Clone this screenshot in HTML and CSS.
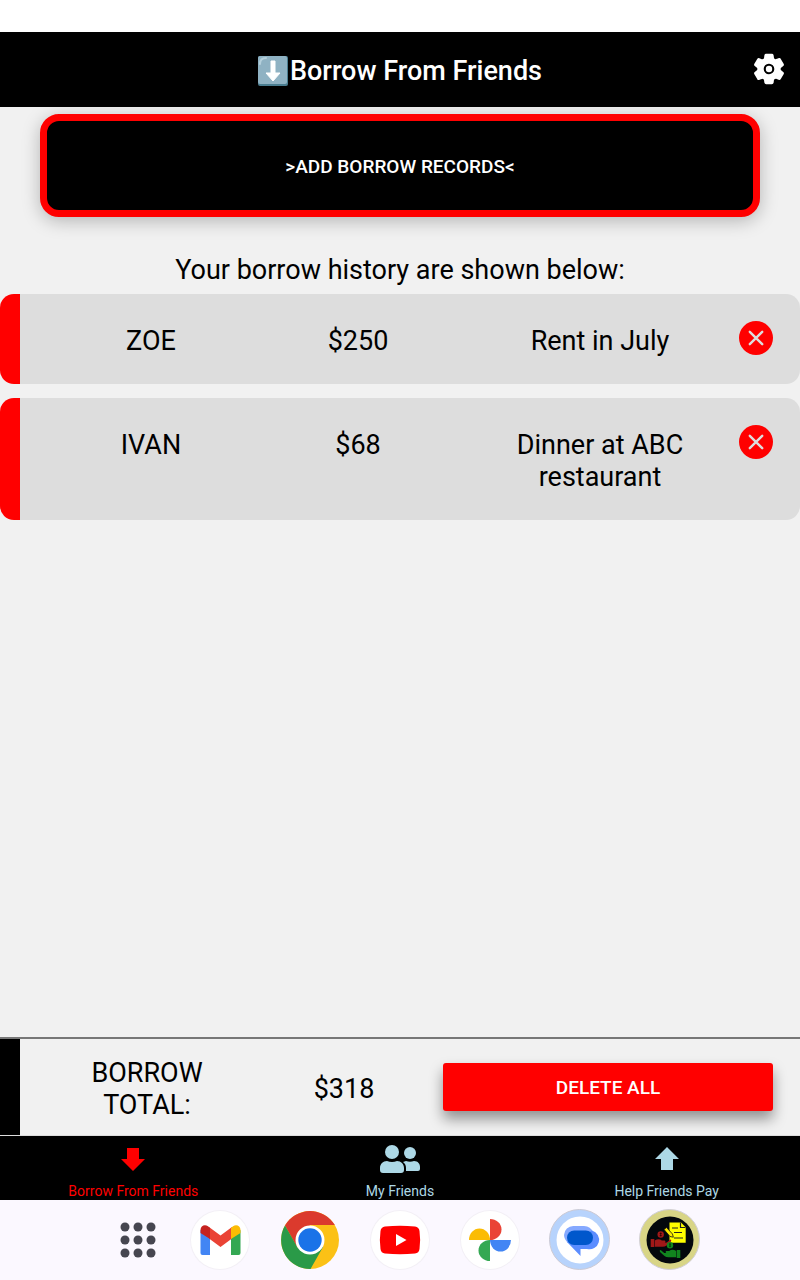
FILE: index.html
```html
<!DOCTYPE html>
<html lang="en">
<head>
<meta charset="utf-8">
<meta name="viewport" content="width=device-width, initial-scale=1">
<title>Borrow From Friends</title>
<link rel="stylesheet" href="styles.css">
</head>
<body>
<header class="header">
  <h1 class="title">
    <svg class="title-icon" viewBox="0 0 30 30" aria-hidden="true">
      <rect width="30" height="30" rx="2" fill="#4a7d90"/>
      <rect width="29" height="28" rx="2" fill="#8fb2c3"/>
      <path d="M2 8Q2 2 8 2" fill="none" stroke="#b5d0dc" stroke-width="2" stroke-linecap="round"/>
      <path d="M13 5h4v12h5l-7 8-7-8h5z" fill="#fff" stroke="#fff" stroke-linejoin="round"/>
    </svg>Borrow From Friends
  </h1>
  <button class="icon-button" type="button" aria-label="Settings">
    <svg class="gear" viewBox="0 0 512 512" fill="#fff" aria-hidden="true"><circle cx="256" cy="256" r="48"/><path d="M470.39 300l-.47-.38-31.56-24.75a16.11 16.11 0 01-6.1-13.33v-11.56a16 16 0 016.11-13.22L469.92 212l.47-.38a26.68 26.68 0 005.9-34.06l-42.71-73.9a1.59 1.59 0 01-.13-.22A26.86 26.86 0 00401 92.14l-.35.13-37.1 14.93a15.94 15.94 0 01-14.47-1.29q-4.92-3.1-10-5.86a15.94 15.94 0 01-8.19-11.82l-5.59-39.59-.12-.72A27.22 27.22 0 00298.76 26h-85.52a26.92 26.92 0 00-26.45 22.39l-.09.56-5.57 39.67a16 16 0 01-8.13 11.82 175.21 175.21 0 00-10 5.82 15.92 15.92 0 01-14.43 1.27l-37.13-15-.35-.14a26.87 26.87 0 00-32.48 11.34l-.13.22-42.77 73.95a26.71 26.71 0 005.9 34.1l.47.38 31.56 24.75a16.11 16.11 0 016.1 13.33v11.56a16 16 0 01-6.11 13.22L42.08 300l-.47.38a26.68 26.68 0 00-5.9 34.06l42.71 73.9a1.59 1.59 0 01.13.22 26.86 26.86 0 0032.45 11.3l.35-.13 37.07-14.93a15.94 15.94 0 0114.47 1.29q4.92 3.11 10 5.86a15.94 15.94 0 018.19 11.82l5.56 39.59.12.72A27.22 27.22 0 00213.24 486h85.52a26.92 26.92 0 0026.45-22.39l.09-.56 5.57-39.67a16 16 0 018.18-11.82c3.42-1.84 6.76-3.79 10-5.82a15.92 15.92 0 0114.43-1.27l37.13 14.95.35.14a26.85 26.85 0 0032.48-11.34 2.53 2.53 0 01.13-.22l42.71-73.89a26.7 26.7 0 00-5.89-34.11zm-134.48-40.24a80 80 0 11-83.66-83.67 80.21 80.21 0 0183.66 83.67z"/></svg>
  </button>
</header>

<main class="content">
  <button class="add-button" type="button">&gt;ADD BORROW RECORDS&lt;</button>
  <h2 class="history-title">Your borrow history are shown below:</h2>
  <ul class="records">
    <li class="record">
      <span class="name">ZOE</span>
      <span class="amount">$250</span>
      <span class="note">Rent in July</span>
      <span class="action"><button class="icon-button" type="button" aria-label="Delete Zoe's record"><svg class="remove" viewBox="0 0 34 34" aria-hidden="true"><circle cx="17" cy="17" r="17" fill="red"/><path d="M10.800 10.800l12.400 12.400M23.200 10.800l-12.400 12.400" stroke="#ddd" stroke-width="2.400" stroke-linecap="round"/></svg></button></span>
    </li>
    <li class="record">
      <span class="name">IVAN</span>
      <span class="amount">$68</span>
      <span class="note">Dinner at ABC restaurant</span>
      <span class="action"><button class="icon-button" type="button" aria-label="Delete Ivan's record"><svg class="remove" viewBox="0 0 34 34" aria-hidden="true"><circle cx="17" cy="17" r="17" fill="red"/><path d="M10.800 10.800l12.400 12.400M23.200 10.800l-12.400 12.400" stroke="#ddd" stroke-width="2.400" stroke-linecap="round"/></svg></button></span>
    </li>
  </ul>
</main>

<section class="total" aria-label="Borrow total">
  <div class="total-row">
    <span class="total-label">BORROW TOTAL:</span>
    <span class="total-amount">$318</span>
    <span class="total-action"><button class="delete-all" type="button">DELETE ALL</button></span>
  </div>
</section>

<nav class="tabs" aria-label="Main">
  <a class="tab tab-active" href="#borrow" aria-current="page">
    <svg class="tab-icon" viewBox="0 0 42 30" fill="currentColor" aria-hidden="true"><path d="M15 4h12v11h6L21 27 9 15h6z"/></svg>
    <span>Borrow From Friends</span>
  </a>
  <a class="tab" href="#friends">
    <svg class="tab-icon" viewBox="0 0 42 30" fill="currentColor" aria-hidden="true"><circle cx="13" cy="8" r="7"/><circle cx="31" cy="9" r="6"/><path d="M1 26v-2c0-4 3-7 7-7q5 2 10 0c4 0 7 3 7 7v2q0 3-3 3H4q-3 0-3-3z"/><path d="M24 18l3-1q4 1.500 8 0c4 0 6 3 6 6v2q0 2-2 2H27v-3q0-4-3-6z"/></svg>
    <span>My Friends</span>
  </a>
  <a class="tab" href="#help">
    <svg class="tab-icon" viewBox="0 0 42 30" fill="currentColor" aria-hidden="true"><path d="M15 26h12V15h6L21 3 9 15h6z"/></svg>
    <span>Help Friends Pay</span>
  </a>
</nav>

<nav class="dock" aria-label="Apps">
  <button class="icon-button launcher" type="button" aria-label="All apps">
    <svg class="app" viewBox="0 0 60 60" fill="#464650" aria-hidden="true"><circle cx="17" cy="17" r="4.500"/><circle cx="30" cy="17" r="4.500"/><circle cx="43" cy="17" r="4.500"/><circle cx="17" cy="30" r="4.500"/><circle cx="30" cy="30" r="4.500"/><circle cx="43" cy="30" r="4.500"/><circle cx="17" cy="43" r="4.500"/><circle cx="30" cy="43" r="4.500"/><circle cx="43" cy="43" r="4.500"/></svg>
  </button>
  <button class="icon-button" type="button" aria-label="Gmail">
    <svg class="app" viewBox="0 0 60 60" aria-hidden="true"><circle cx="30" cy="30" r="30" fill="#f3f0f6"/><circle cx="30" cy="30" r="29" fill="#fff"/><path d="M10.500 20l9.500 7v18h-7.500q-2 0-2-2z" fill="#4285f4"/><path d="M50.500 20L41 27v18h7.500q2 0 2-2z" fill="#34a853"/><path d="M19 17l11.500 8.500L42 17v11.500L30.500 37 19 28.500z" fill="#ea4335"/><path d="M41 18l2-1.700c3-2.500 7.500-.8 7.500 3.700v3L41 29z" fill="#fbbc04"/><path d="M20 18l-2-1.700c-3-2.500-7.500-.8-7.500 3.700v3L20 29z" fill="#c5221f"/></svg>
  </button>
  <button class="icon-button" type="button" aria-label="Chrome">
    <svg class="app" viewBox="0 0 60 60" aria-hidden="true"><circle cx="30" cy="30" r="29" fill="#fbc116"/><path d="M5 15.500A29 29 0 0 1 54.800 15H30L17 37z" fill="#db3a2d"/><path d="M5 15.500A29 29 0 0 0 30.500 59L43 37 17.500 37.500z" fill="#2a9a48"/><circle cx="30" cy="30" r="14.500" fill="#fff"/><circle cx="30" cy="30" r="11.700" fill="#1a73e8"/></svg>
  </button>
  <button class="icon-button" type="button" aria-label="YouTube">
    <svg class="app" viewBox="0 0 60 60" aria-hidden="true"><circle cx="30" cy="30" r="30" fill="#f3f0f6"/><circle cx="30" cy="30" r="29" fill="#fff"/><path d="M15 16.500q15-1.500 30 0 4 .5 4.500 4.500 1.300 9 0 18-.5 4-4.500 4.500-15 1.500-30 0-4-.5-4.500-4.500-1.300-9 0-18 .5-4 4.500-4.500z" fill="red"/><path d="M26 24l10.500 6L26 36z" fill="#fff"/></svg>
  </button>
  <button class="icon-button" type="button" aria-label="Photos">
    <svg class="app" viewBox="0 0 60 60" aria-hidden="true"><circle cx="30" cy="30" r="30" fill="#f3f0f6"/><circle cx="30" cy="30" r="29" fill="#fff"/><path d="M30 9a11.500 10.500 0 0 1 0 21z" fill="#ea4335"/><path d="M51 30a10.500 11.500 0 0 1-21 0z" fill="#4285f4"/><path d="M30 51a11.500 10.500 0 0 1 0-21z" fill="#34a853"/><path d="M9 30a10.500 11.500 0 0 1 21 0z" fill="#fbbc04"/></svg>
  </button>
  <button class="icon-button" type="button" aria-label="Messages">
    <svg class="app" viewBox="0 0 60 60" aria-hidden="true"><circle cx="29.500" cy="29.500" r="30" fill="#b7d3fc" stroke="#cccad4"/><circle cx="30" cy="30" r="23.500" fill="#fff"/><path d="M23.500 16H34a9.500 9.500 0 0 1 9 6.500L40 33H18q-4-4-4-8a9.300 9.300 0 0 1 9.500-9z" fill="#85a9ff"/><path d="M42 20.500a9.500 9.500 0 0 1-5 18.500h-6.500v7L17 32z" fill="#5b8dff"/><rect x="17" y="20.500" width="26" height="14.500" rx="7.200" fill="#0057cc"/></svg>
  </button>
  <button class="icon-button" type="button" aria-label="Borrow tracker">
    <svg class="app" viewBox="0 0 60 60" aria-hidden="true"><circle cx="29.500" cy="29.500" r="30" fill="#d8d586" stroke="#d2d0d8"/><circle cx="30" cy="30" r="23.500" fill="#03080c"/><path d="M29.500 12.500H41l4.700 4.700v15.500H29.500z" fill="#ff0"/><path d="M40.500 12.500v5h5M32 18h6M34 22.500h8M34 28h9" fill="none" stroke="#222" stroke-width="1.200"/><path d="M24 19.500l2.500-2 6 6.500.8 3.200-3.300-.7z" fill="#fce800" stroke="#111" stroke-width=".8"/><circle cx="20.700" cy="24.500" r="3.200" fill="#a01818"/><path d="M20.700 22.500v4M19.700 23.500h2M19.700 25.500h2" stroke="#210000" stroke-width=".7"/><path d="M10.700 29h3.600v8h-3.600z" fill="#a01818"/><path d="M14.800 30.500q4-2.500 7 0h3q1.500 1 0 2h-3 5l3.500-3q1.600.2.700 2l-4.500 4q-1.500 1.200-4 1.200h-7.700z" fill="#a01818"/><circle cx="30" cy="35.200" r="3.200" fill="#11851e"/><path d="M30 33.200v4M29 34.200h2M29 36.200h2" stroke="#032b05" stroke-width=".7"/><path d="M36.700 40h3.600v8h-3.600z" fill="#11851e"/><path d="M36.200 41q-4-2.500-7 0h-3q-1.500 1 0 2h3-5l-3.500-3q-1.600.2-.7 2l4.500 4q1.500 1.200 4 1.200h7.700z" fill="#11851e"/></svg>
  </button>
</nav>
</body>
</html>
```

FILE: styles.css
```css
* { box-sizing: border-box; }

body {
  margin: 0;
  min-height: 100vh;
  padding-top: 32px;
  display: flex;
  flex-direction: column;
  background: #fff;
  color: #000;
  font-family: Roboto, "Liberation Sans", sans-serif;
  font-size: 27px;
  line-height: 32px;
}

button { font-family: inherit; cursor: pointer; }
svg { display: block; flex: none; overflow: visible; }

.icon-button { padding: 0; border: 0; background: none; }

.header {
  display: grid;
  grid-template-columns: 1fr auto 1fr;
  align-items: center;
  min-height: 75px;
  padding: 0 14px 2px;
  background: #000;
  color: #fff;
}
.title {
  grid-column: 2;
  display: flex;
  align-items: center;
  gap: 2px;
  margin: 0;
  padding-top: 4px;
  font-size: 27px;
  font-weight: 500;
}
.title-icon { width: 30px; height: 30px; }
.header .icon-button { justify-self: end; }
.gear { width: 34px; height: 34px; }

.content {
  flex: 1;
  padding-top: 7px;
  background: #f1f1f1;
}
.add-button {
  display: block;
  width: calc(100% - 80px);
  margin: 0 auto;
  padding: 35px 20px 33px;
  border: 7px solid red;
  border-radius: 19px;
  background: #000;
  color: #fff;
  font-size: 19px;
  font-weight: 500;
  line-height: 21px;
  box-shadow: 0 4px 18px rgba(0, 0, 0, .25);
}
.history-title {
  margin: 37px 0 8px;
  font-size: 27px;
  font-weight: 400;
  text-align: center;
}

.records {
  display: flex;
  flex-direction: column;
  gap: 14px;
  margin: 0;
  padding: 0;
  list-style: none;
}
.record {
  display: grid;
  grid-template-columns: 262fr 152fr 276fr 90fr;
  padding: 27px 0;
  border-left: 20px solid red;
  border-radius: 14px;
  background: #ddd;
  text-align: center;
}
.name, .amount, .note { padding-top: 4px; }
.note { padding-left: 56px; }
.action { display: flex; justify-content: flex-end; align-items: flex-start; padding-right: 27px; }
.remove { width: 34px; height: 34px; }

.total {
  border-top: 2px solid #777;
  border-bottom: 1px solid #ddd;
  background: #f1f1f1;
}
.total-row {
  display: grid;
  grid-template-columns: 254fr 140fr 386fr;
  align-items: center;
  min-height: 96px;
  border-left: 20px solid #000;
  text-align: center;
}
.total-label { padding: 4px 44px 0; }
.total-amount { padding-top: 4px; }
.total-action { padding: 0 27px 0 29px; }
.delete-all {
  display: block;
  width: 100%;
  padding: 13px 12px 11px;
  border: 0;
  border-radius: 3px;
  background: red;
  color: #fff;
  font-size: 19px;
  font-weight: 500;
  line-height: 24px;
  box-shadow: 0 8px 14px rgba(0, 0, 0, .4);
}

.tabs {
  display: grid;
  grid-template-columns: repeat(3, 1fr);
  position: relative;
  background: #000;
}
.tab {
  display: flex;
  flex-direction: column;
  align-items: center;
  gap: 9px;
  padding-top: 8px;
  color: #add8e6;
  font-size: 14px;
  line-height: 17px;
  text-decoration: none;
}
.tab-active { color: red; }
.tab-icon { width: 42px; height: 30px; }

.dock {
  display: flex;
  justify-content: center;
  gap: 30px;
  padding: 10px 0 10px 8px;
  background: #fbf8ff;
}
.launcher { margin-right: -8px; }
.app { width: 60px; height: 60px; }
```
